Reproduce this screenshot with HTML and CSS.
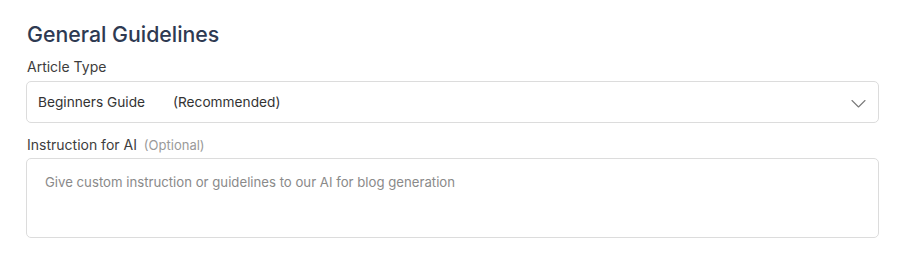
FILE: index.html
```html
<!DOCTYPE html>
<html>
<head>
<meta charset="utf-8">
<link rel="stylesheet" href="styles.css">
</head>
<body>
<section class="panel">
  <h2 class="title">General Guidelines</h2>
  <div class="field">
    <label class="label">Article Type</label>
    <div class="select">
      <span class="select-value">Beginners Guide</span>
      <span class="select-note">(Recommended)</span>
      <svg class="chevron" width="15" height="10" viewBox="0 0 15 10" fill="none">
        <path d="M1 1.5 L7.5 8 L14 1.5" stroke="#7a7a7a" stroke-width="1.1" stroke-linecap="round" stroke-linejoin="round"/>
      </svg>
    </div>
  </div>
  <div class="field">
    <label class="label">Instruction for AI <span class="optional">(Optional)</span></label>
    <div class="textarea">Give custom instruction or guidelines to our AI for blog generation</div>
  </div>
</section>
</body>
</html>
```
FILE: styles.css
```css
html, body {
  margin: 0;
  padding: 0;
  background: #ffffff;
}
body {
  font-family: Inter, "Noto Sans", sans-serif;
}
.panel {
  padding: 21px 31px 0 26px;
  display: flex;
  flex-direction: column;
}
.title {
  margin: 0;
  font-size: 21.3px;
  font-weight: 500;
  line-height: 27px;
  color: #2e3a52;
  padding-left: 1px;
}
.field {
  display: flex;
  flex-direction: column;
}
.label {
  font-size: 14px;
  line-height: 20px;
  color: #3d3d3d;
  padding-left: 1px;
  margin-top: 9px;
  margin-bottom: 4px;
}
.field + .field .label {
  margin-top: 12px;
  margin-bottom: 3px;
}
.optional {
  font-size: 13px;
  color: #9a9a9a;
  margin-left: 3px;
}
.select {
  height: 42px;
  box-sizing: border-box;
  border: 1px solid #dcdcdc;
  border-radius: 5px;
  display: flex;
  align-items: center;
  padding: 0 12px 0 11px;
}
.select-value {
  font-size: 13.7px;
  color: #333333;
}
.select-note {
  font-size: 13.7px;
  color: #333333;
  margin-left: 28px;
}
.chevron {
  margin-left: auto;
  margin-top: 3px;
}
.textarea {
  height: 80px;
  box-sizing: border-box;
  border: 1px solid #dcdcdc;
  border-radius: 5px;
  padding: 13px 18px;
  font-size: 13.2px;
  line-height: 20px;
  color: #8a8a8a;
}
```
